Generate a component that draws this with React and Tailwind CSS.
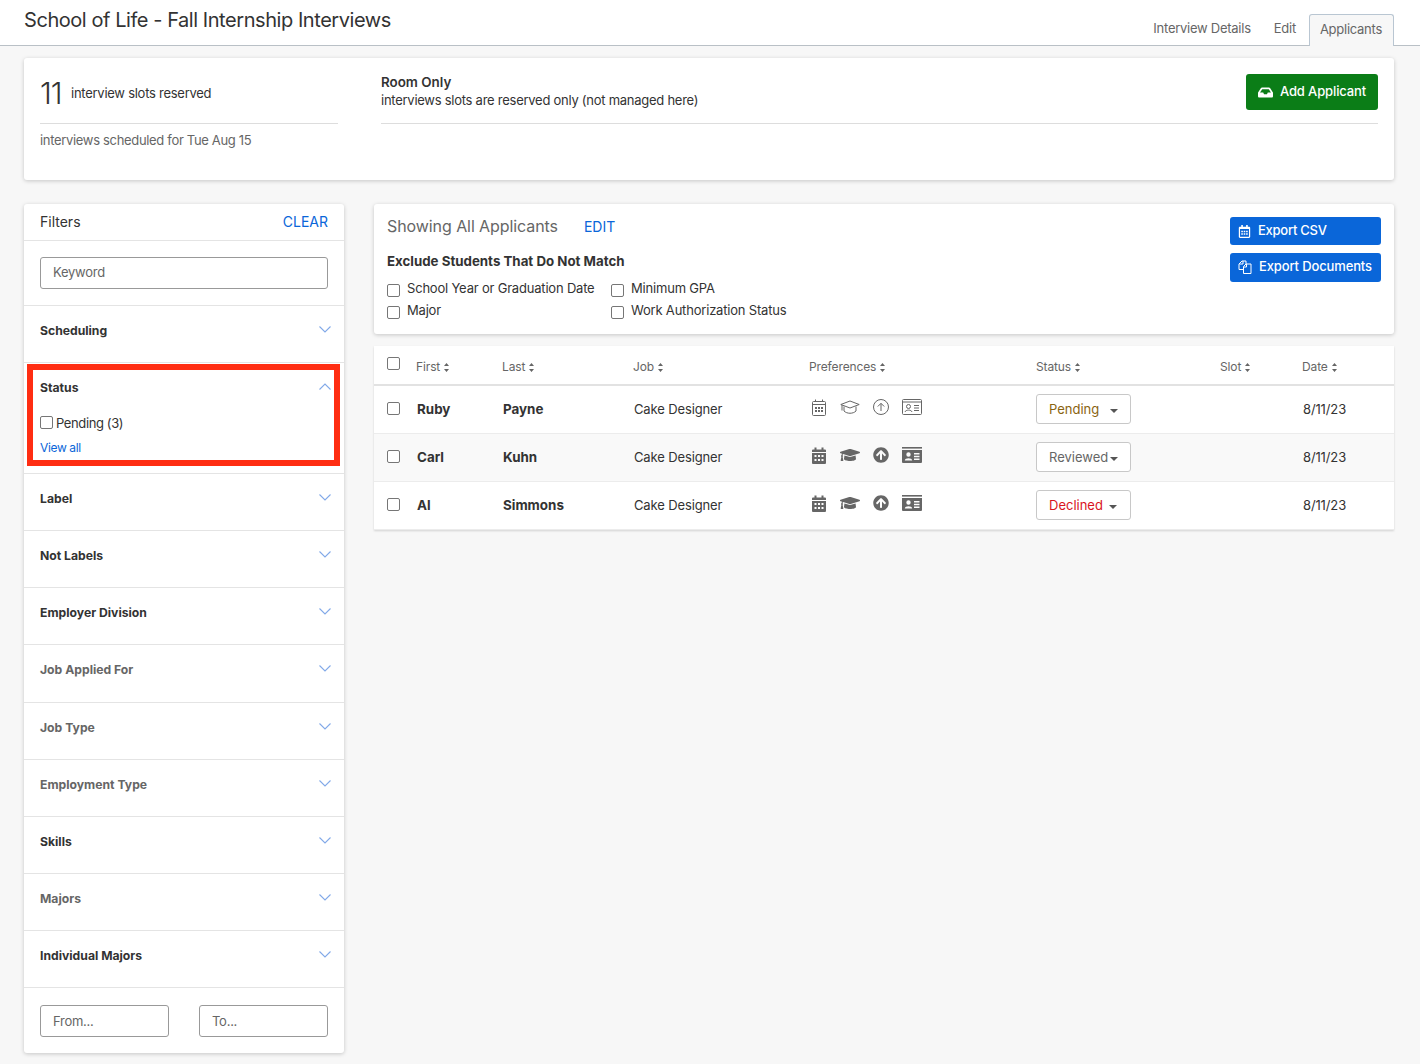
import React from 'react';
import { FaInbox, FaRegCalendarAlt, FaGraduationCap, FaArrowCircleUp } from 'react-icons/fa';

const filters = [
  { name: 'Label', dark: true, h: 'h-[57px]' },
  { name: 'Not Labels', dark: true, h: 'h-[57px]' },
  { name: 'Employer Division', dark: true, h: 'h-[57px]' },
  { name: 'Job Applied For', dark: false, h: 'h-[58px]' },
  { name: 'Job Type', dark: false, h: 'h-[57px]' },
  { name: 'Employment Type', dark: false, h: 'h-[57px]' },
  { name: 'Skills', dark: true, h: 'h-[57px]' },
  { name: 'Majors', dark: false, h: 'h-[57px]' },
  { name: 'Individual Majors', dark: true, h: 'h-[57px]' },
];

const applicants = [
  { first: 'Ruby', last: 'Payne', status: 'Pending', color: 'text-[#8a6410]', gap: 'ml-[11px]', outline: true },
  { first: 'Carl', last: 'Kuhn', status: 'Reviewed', color: 'text-[#666666]', gap: 'ml-[2px]', shaded: true },
  { first: 'Al', last: 'Simmons', status: 'Declined', color: 'text-[#d9141e]', gap: 'ml-[6px]' },
];

const Chevron = ({ up }) => (
  <svg width="12" height="7" viewBox="0 0 12 7" fill="none" stroke="#82a9e8" strokeWidth="1.1">
    <path d={up ? 'M0.5 6.5 L6 1 L11.5 6.5' : 'M0.5 0.5 L6 6 L11.5 0.5'} />
  </svg>
);

const Sort = () => (
  <svg width="5" height="9" viewBox="0 0 5 9" fill="#666666" className="ml-[4px] mt-px">
    <path d="M2.5 0 L5 3 H0 Z M2.5 9 L0 6 H5 Z" />
  </svg>
);

const Caret = () => (
  <svg width="8" height="4" viewBox="0 0 8 4" fill="#555555" className="mt-[2px]">
    <path d="M0 0 H8 L4 4 Z" />
  </svg>
);

const Check = ({ className = '' }) => (
  <input
    type="checkbox"
    className={`appearance-none w-[13px] h-[13px] shrink-0 border border-[#767676] rounded-[2px] bg-white ${className}`}
  />
);

const CalendarIcon = ({ outline }) =>
  outline ? (
    <svg width="14" height="17" viewBox="0 0 14 17" fill="none" stroke="#666666" strokeWidth="1">
      <rect x="0.5" y="2.5" width="13" height="14" rx="1" />
      <path d="M0.5 5.5 H13.5 M3.5 0.5 V3 M10.5 0.5 V3" />
      <path stroke="none" fill="#666666" d="M3 8h2v2H3z M6 8h2v2H6z M9 8h2v2H9z M3 11h2v2H3z M6 11h2v2H6z M9 11h2v2H9z" />
    </svg>
  ) : (
    <svg width="14" height="17" viewBox="0 0 14 17" fill="#666666">
      <path d="M0 3.5a1 1 0 0 1 1-1h1.5V0.5h2v2h5V0.5h2v2H13a1 1 0 0 1 1 1V5H0z" />
      <path
        fillRule="evenodd"
        d="M0 6h14v10a1 1 0 0 1-1 1H1a1 1 0 0 1-1-1z M2.5 8v2h2V8z M6 8v2h2V8z M9.5 8v2h2V8z M2.5 12v2h2v-2z M6 12v2h2v-2z M9.5 12v2h2v-2z"
      />
    </svg>
  );

const CapIcon = ({ outline }) =>
  outline ? (
    <svg width="20" height="15" viewBox="0 0 20 15" fill="none" stroke="#666666" strokeWidth="1">
      <path d="M0.8 4.5 L10 1 L19.2 4.5 L10 8 Z" />
      <path d="M4 6.5 V11 C7 14 13 14 16 11 V6.5" />
      <path d="M2 5 V10.5" />
    </svg>
  ) : (
    <FaGraduationCap size={20} color="#666666" />
  );

const ArrowIcon = ({ outline }) =>
  outline ? (
    <svg width="16" height="16" viewBox="0 0 16 16" fill="none" stroke="#666666" strokeWidth="1">
      <circle cx="8" cy="8" r="7.5" />
      <path d="M8 12 V4.5 M4.8 7.5 L8 4.3 L11.2 7.5" />
    </svg>
  ) : (
    <FaArrowCircleUp size={16} color="#666666" />
  );

const IdIcon = ({ outline }) =>
  outline ? (
    <svg width="20" height="16" viewBox="0 0 20 16" fill="none" stroke="#666666" strokeWidth="1">
      <rect x="0.5" y="0.5" width="19" height="15" rx="1" />
      <path d="M0.5 3 H19.5" />
      <circle cx="6.5" cy="7.5" r="2" />
      <path d="M3 13 C3.5 10.5 9.5 10.5 10 13 M12 6.5 H17 M12 9 H17 M12 11.5 H17" />
    </svg>
  ) : (
    <svg width="20" height="16" viewBox="0 0 20 16" fill="#666666">
      <path d="M0 0h20v1.6H0z" />
      <path
        fillRule="evenodd"
        d="M0 3h20v12a1 1 0 0 1-1 1H1a1 1 0 0 1-1-1z M6.5 5.3a2.2 2.2 0 1 0 0 4.4a2.2 2.2 0 0 0 0-4.4z M2.8 13.5h7.4c0-3-7.4-3-7.4 0z M12 6v1.4h5.5V6z M12 8.8v1.4h5.5V8.8z M12 11.6V13h5.5v-1.4z"
      />
    </svg>
  );

const DocsIcon = () => (
  <svg width="14" height="14" viewBox="0 0 14 14" fill="none" stroke="#ffffff" strokeWidth="1">
    <path d="M5 9.5 H1 V4 L4 1 H8 V4" />
    <path d="M5 1 V4 H1.5" />
    <path d="M5.5 13.5 V6.5 L8 4 H13 V13.5 Z" />
    <path d="M8.5 4 V7 H5.5" />
  </svg>
);

const FilterRow = ({ name, dark, h }) => (
  <div className={`${h} border-t border-[#e4e4e4] pl-4 pr-[13px] pt-[17px] flex items-start justify-between`}>
    <span className={`text-[12.2px] tracking-normal leading-[16px] font-bold ${dark ? 'text-[#333333]' : 'text-[#666666]'}`}>{name}</span>
    <span className="mt-[3px] flex"><Chevron /></span>
  </div>
);

const columns = ['First', 'Last', 'Job', 'Preferences', 'Status', 'Slot', 'Date'];

export default function App() {
  return (
    <div className="min-h-[1064px] bg-[#f7f7f7] text-[#333333] text-[13px] tracking-[-0.02em] font-['Inter',sans-serif]">
      {/* header */}
      <div className="h-[46px] bg-white border-b border-[#b9c0c6] pl-6 pr-[26px] flex justify-between">
        <h1 className="text-[20px] tracking-[-0.4px] leading-[24px] pt-[8px] text-[#333333] w-[370px] whitespace-nowrap"><span className="tracking-[-0.44px]">School of Life - Fall Internship Interviews</span></h1>
        <div className="flex items-end text-[13px] text-[#666666]">
          <span className="mb-[7px] mr-[23px]">Interview Details</span>
          <span className="mb-[7px] mr-[13px]">Edit</span>
          <span className="h-[32px] -mb-px pl-[10px] pr-[11px] pt-[5px] bg-[#f7f7f7] border border-b-0 border-[#b9c6d2] rounded-t-[3px]">Applicants</span>
        </div>
      </div>

      <div className="pl-6 pr-[26px] pt-3">
        {/* summary card */}
        <div className="h-[122px] bg-white rounded-[3px] shadow-[0_1px_4px_rgba(0,0,0,0.2)] pl-4 pr-4 pt-4 flex">
          <div className="w-[298px] mr-[43px]">
            <div className="h-[50px] border-b border-[#dddddd] flex items-start">
              <span className="text-[30px] leading-[38px] font-light tracking-[-1px] w-[31px]">11</span>
              <span className="mt-[10px]">interview slots reserved</span>
            </div>
            <p className="mt-[7px] text-[#666666] tracking-[-0.025em]">interviews scheduled for Tue Aug 15</p>
          </div>
          <div className="flex-1 h-[50px] border-b border-[#dddddd] flex items-start justify-between">
            <div className="leading-[18px] -mt-px">
              <div className="font-semibold text-[13.4px] tracking-normal">Room Only</div>
              <div>interviews slots are reserved only (not managed here)</div>
            </div>
            <button className="w-[132px] h-9 bg-[#0b7d17] rounded-[3px] text-white font-medium tracking-[-0.01em] flex items-center justify-center gap-[7px]">
              <FaInbox size={15} />
              Add Applicant
            </button>
          </div>
        </div>

        <div className="flex items-start mt-6 gap-[30px]">
          {/* filters */}
          <div className="w-[320px] h-[849px] bg-white rounded-[3px] shadow-[0_1px_4px_rgba(0,0,0,0.2)] relative">
            <div className="h-[36px] pl-4 pr-4 pb-[2px] flex items-center justify-between tracking-normal">
              <span className="text-[14px] text-[#333333]">Filters</span>
              <span className="text-[14px] text-[#0a66d9]">CLEAR</span>
            </div>
            <div className="h-[65px] border-t border-[#e4e4e4] px-4 pt-4">
              <input
                placeholder="Keyword"
                className="w-full h-[32px] px-3 pb-[2px] border border-[#999999] rounded-[3px] text-[13px] placeholder:text-[#666666] outline-none"
              />
            </div>
            <FilterRow name="Scheduling" dark h="h-[57px]" />
            <div className="h-[111px] border-t border-[#e4e4e4] pl-4 pr-[13px] pt-[17px] relative">
              <div className="flex justify-between items-start">
                <span className="text-[12.2px] tracking-normal leading-[16px] font-bold">Status</span>
                <span className="mt-[3px] flex"><Chevron up /></span>
              </div>
              <label className="flex items-center gap-[3px] mt-[20px] h-4 tracking-[-0.03em]">
                <Check className="-mt-[3px]" />
                <span>Pending (3)</span>
              </label>
              <div className="text-[12px] tracking-[-0.03em] leading-[16px] mt-[8px] text-[#0a66d9]">View all</div>
              {/* annotation box from the screenshot */}
              <div className="absolute left-[3px] top-[1px] w-[313px] h-[102px] border-[6px] border-[#ff2d12] pointer-events-none" />
            </div>
            {filters.map((f) => (
              <FilterRow key={f.name} {...f} />
            ))}
            <div className="border-t border-[#e4e4e4] px-4 pt-[17px] flex justify-between">
              <input placeholder="From..." className="w-[129px] h-[32px] px-3 border border-[#999999] rounded-[3px] text-[13px] placeholder:text-[#666666] outline-none" />
              <input placeholder="To..." className="w-[129px] h-[32px] px-3 border border-[#999999] rounded-[3px] text-[13px] placeholder:text-[#666666] outline-none" />
            </div>
          </div>

          {/* main column */}
          <div className="flex-1">
            <div className="h-[130px] bg-white rounded-[3px] shadow-[0_1px_4px_rgba(0,0,0,0.2)] pl-[13px] pr-[13px] pt-[13px] flex justify-between">
              <div>
                <div className="flex items-center h-5 -mt-px">
                  <span className="text-[16px] tracking-[-0.005em] text-[#666666]">Showing All Applicants</span>
                  <span className="ml-[26px] text-[14px] tracking-normal text-[#0a66d9]">EDIT</span>
                </div>
                <div className="mt-[17px] font-bold text-[13.3px] tracking-normal leading-4">Exclude Students That Do Not Match</div>
                <div className="grid grid-cols-[224px_auto] mt-[11px] gap-y-[5px] leading-4 tracking-[-0.015em]">
                  <label className="flex gap-[7px]"><Check className="mt-[4px]" />School Year or Graduation Date</label>
                  <label className="flex gap-[7px]"><Check className="mt-[4px]" />Minimum GPA</label>
                  <label className="flex gap-[7px]"><Check className="mt-[4px]" />Major</label>
                  <label className="flex gap-[7px]"><Check className="mt-[4px]" />Work Authorization Status</label>
                </div>
              </div>
              <div className="flex flex-col gap-2">
                <button className="w-[151px] h-7 pl-2 bg-[#0a66d9] rounded-[3px] text-white font-medium flex items-center gap-[7px]">
                  <FaRegCalendarAlt size={13} />
                  Export CSV
                </button>
                <button className="w-[151px] h-[29px] pl-2 pb-[2px] bg-[#0a66d9] rounded-[3px] text-white font-medium tracking-[-0.01em] flex items-center gap-[7px]">
                  <DocsIcon />
                  Export Documents
                </button>
              </div>
            </div>

            {/* applicants table */}
            <div className="mt-3 bg-white shadow-[0_1px_2px_rgba(0,0,0,0.15)]">
              <div className="h-[40px] border-b-2 border-[#e2e2e2] pl-[13px] grid grid-cols-[29px_86px_131px_176px_227px_184px_82px_auto] items-center text-[12px] tracking-[-0.01em] text-[#666666]">
                <Check className="-mt-[3px]" />
                {columns.map((c) => (
                  <span key={c} className="flex items-center mt-[4px]">{c}<Sort /></span>
                ))}
              </div>
              {applicants.map((a) => (
                <div
                  key={a.first}
                  className={`h-[48px] border-b border-[#ececec] pl-[13px] grid grid-cols-[30px_86px_131px_178px_224px_184px_83px_auto] items-center tracking-[-0.01em] ${a.shaded ? 'bg-[#f9f9f9]' : ''}`}
                >
                  <Check className="-mt-[3px]" />
                  <span className="font-bold text-[13.4px] tracking-normal">{a.first}</span>
                  <span className="font-bold text-[13.4px] tracking-normal">{a.last}</span>
                  <span>Cake Designer</span>
                  <div className="flex items-center -mt-[5px]">
                    <span className="w-[28px] flex"><CalendarIcon outline={a.outline} /></span>
                    <span className="w-[33px] flex"><CapIcon outline={a.outline} /></span>
                    <span className="w-[29px] flex"><ArrowIcon outline={a.outline} /></span>
                    <IdIcon outline={a.outline} />
                  </div>
                  <div className="w-[95px] h-[30px] -mt-[2px] pl-3 pt-[2px] border border-[#c8c8c8] rounded-[3px] bg-white flex items-center tracking-normal">
                    <span className={a.color}>{a.status}</span>
                    <span className={`${a.gap} flex`}><Caret /></span>
                  </div>
                  <span />
                  <span>8/11/23</span>
                </div>
              ))}
            </div>
          </div>
        </div>
      </div>
    </div>
  );
}
